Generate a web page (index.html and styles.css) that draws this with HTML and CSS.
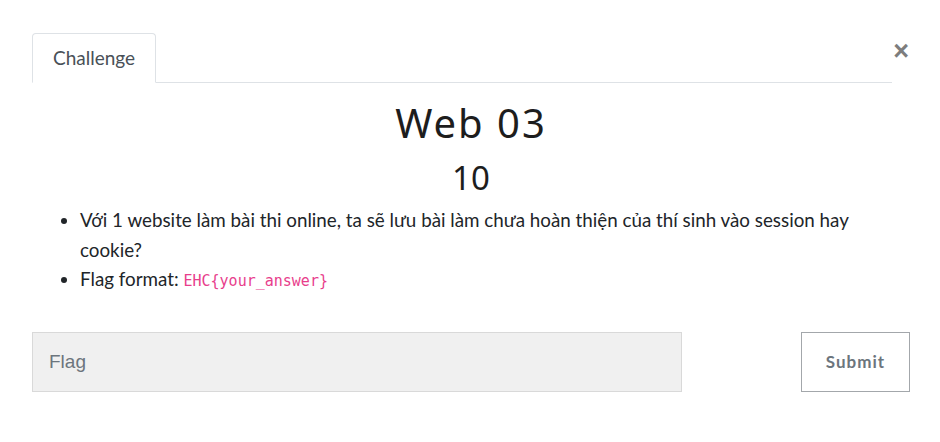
FILE: index.html
```html
<!DOCTYPE html>
<html>
<head>
<meta charset="utf-8">
<link rel="stylesheet" href="styles.css">
</head>
<body>
<div class="modal">
  <div class="header">
    <ul class="tabs">
      <li class="tab active">Challenge</li>
    </ul>
    <button class="close" aria-label="Close">&times;</button>
  </div>
  <div class="content">
    <h2 class="name">Web 03</h2>
    <h3 class="value">10</h3>
    <ul class="desc">
      <li>Với 1 website làm bài thi online, ta sẽ lưu bài làm chưa hoàn thiện của thí sinh vào session hay cookie?</li>
      <li>Flag format: <code>EHC{your_answer}</code></li>
    </ul>
  </div>
  <form class="submit-row">
    <input class="flag" type="text" placeholder="Flag">
    <button class="submit" type="button">Submit</button>
  </form>
</div>
</body>
</html>
```

FILE: styles.css
```css
html, body {
  margin: 0;
  padding: 0;
  background: #fff;
}
body {
  font-family: Lato, "Open Sans", sans-serif;
  color: #212529;
}
.modal {
  padding: 33px 30px 0 32px;
}
.header {
  display: flex;
  align-items: flex-start;
}
.tabs {
  list-style: none;
  margin: 0;
  padding: 0;
  width: 860px;
  display: flex;
  border-bottom: 1px solid #dee2e6;
}
.tab {
  padding: 0 20px;
  height: 48px;
  line-height: 48px;
  font-size: 19px;
  color: #495057;
  border: 1px solid transparent;
  border-radius: 4px 4px 0 0;
  margin-bottom: -1px;
}
.tab.active {
  border-color: #dee2e6 #dee2e6 #fff;
  background: #fff;
}
.close {
  margin-left: auto;
  border: 0;
  background: none;
  padding: 0;
  font-family: "Liberation Sans", Arial, sans-serif;
  font-size: 27px;
  font-weight: 700;
  line-height: 1;
  color: #7d7d7d;
  margin-top: 5px;
  margin-right: 1px;
}
.content {
  text-align: center;
}
.name {
  font-family: "Noto Sans", Lato, sans-serif;
  font-weight: 400;
  font-size: 40px;
  margin: 16px 0 0;
  line-height: 48px;
  letter-spacing: 2px;
  color: #1d1d1d;
}
.value {
  font-family: "Noto Sans", Lato, sans-serif;
  font-weight: 400;
  font-size: 33px;
  margin: 11px 0 0;
  line-height: 40px;
  color: #1d1d1d;
}
.desc {
  text-align: left;
  margin: 7px 0 0;
  padding-left: 48px;
  font-size: 18.8px;
  line-height: 29.5px;
  padding-right: 40px;
}
code {
  font-family: "DejaVu Sans Mono", monospace;
  font-size: 15px;
  line-height: 1;
  color: #e83e8c;
}
.submit-row {
  display: flex;
  justify-content: space-between;
  margin-top: 38px;
}
.flag {
  width: 650px;
  height: 60px;
  box-sizing: border-box;
  background: #f0f0f0;
  border: 1px solid #d9d9d9;
  padding: 0 16px;
  font-family: "Liberation Sans", Arial, sans-serif;
  font-size: 19px;
  color: #495057;
  outline: none;
}
.flag::placeholder {
  color: #6c757d;
}
.submit {
  width: 109px;
  height: 60px;
  box-sizing: border-box;
  background: #fff;
  border: 1px solid #a3a7ab;
  font-family: Lato, sans-serif;
  font-weight: 700;
  font-size: 17px;
  letter-spacing: 1px;
  color: #6c757d;
}
```
